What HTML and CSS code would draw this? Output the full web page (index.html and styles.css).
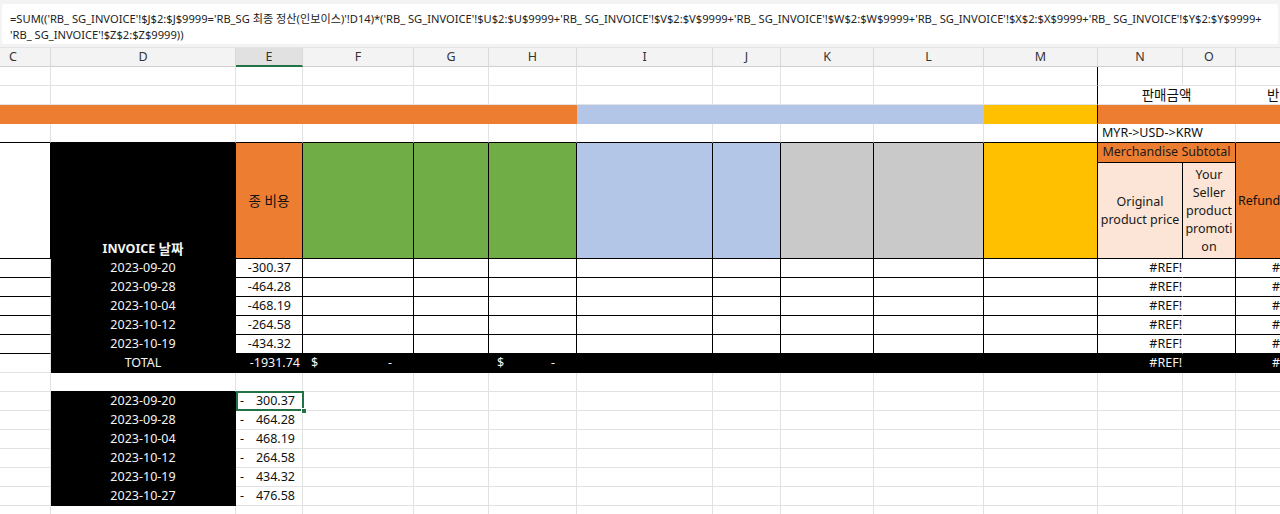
FILE: index.html
```html
<!DOCTYPE html>
<html lang="ko">
<head>
<meta charset="utf-8">
<title>RB_SG 최종 정산</title>
<link rel="stylesheet" href="styles.css">
</head>
<body>
<div class="app">
  <div class="fbar">
    <div class="fbox">=SUM(('RB_ SG_INVOICE'!$J$2:$J$9999='RB_SG 최종 정산(인보이스)'!D14)*('RB_ SG_INVOICE'!$U$2:$U$9999+'RB_ SG_INVOICE'!$V$2:$V$9999+'RB_ SG_INVOICE'!$W$2:$W$9999+'RB_ SG_INVOICE'!$X$2:$X$9999+'RB_ SG_INVOICE'!$Y$2:$Y$9999+<br>'RB_ SG_INVOICE'!$Z$2:$Z$9999))</div>
  </div>
  <div class="sheet">
    <!-- column headers -->
    <div class="h hl">C</div><div class="h">D</div><div class="h hs">E</div><div class="h">F</div><div class="h">G</div><div class="h">H</div><div class="h">I</div><div class="h">J</div><div class="h">K</div><div class="h">L</div><div class="h">M</div><div class="h">N</div><div class="h">O</div><div class="h">P</div>
    <!-- row 1 -->
    <div></div><div></div><div></div><div></div><div></div><div></div><div></div><div></div><div></div><div></div><div class="br"></div><div></div><div></div><div></div>
    <!-- row 2 -->
    <div></div><div></div><div></div><div></div><div></div><div></div><div></div><div></div><div></div><div></div><div class="br"></div><div class="s2 ctr"><span class="ko">판매금액</span></div><div class="pl31"><span class="ko">반품금액</span></div>
    <!-- row 3 -->
    <div class="s6 fo"></div><div class="s4 fb"></div><div class="fy br"></div><div class="s3 fo"></div>
    <!-- row 4 -->
    <div class="bb"></div><div class="bb"></div><div class="bb"></div><div class="bb"></div><div class="bb"></div><div class="bb"></div><div class="bb"></div><div class="bb"></div><div class="bb"></div><div class="bb"></div><div class="bb br"></div><div class="s2 bb pl4">MYR-&gt;USD-&gt;KRW</div><div class="bb"></div>
    <!-- row 5 (two sub rows) -->
    <div class="r2 bb br"></div>
    <div class="r2 k hd">INVOICE&nbsp;<span class="ko">날짜</span></div>
    <div class="r2 fo br bb vc"><span class="ko">종 비용</span></div>
    <div class="r2 fg br bb"></div>
    <div class="r2 fg br bb"></div>
    <div class="r2 fg br bb"></div>
    <div class="r2 fb br bb"></div>
    <div class="r2 fb br bb"></div>
    <div class="r2 fs br bb"></div>
    <div class="r2 fs br bb"></div>
    <div class="r2 fy br bb"></div>
    <div class="s2 fo br bb ctr ms">Merchandise Subtotal</div>
    <div class="r2 fo bb vl">Refund amount</div>
    <div class="fp br bb wrap">Original<br>product price</div>
    <div class="fp br bb wrap">Your<br>Seller<br>product<br>promoti<br>on</div>
    <!-- data rows -->
    <div class="bb"></div><div class="k ctr">2023-09-20</div><div class="bb br rt pr11">-300.37</div><div class="bb br"></div><div class="bb br"></div><div class="bb br"></div><div class="bb br"></div><div class="bb br"></div><div class="bb br"></div><div class="bb br"></div><div class="bb br"></div><div class="bb nr rt">#REF!</div><div class="bb br"></div><div class="bb pl36">#REF!</div>
    <div class="bb"></div><div class="k ctr">2023-09-28</div><div class="bb br rt pr11">-464.28</div><div class="bb br"></div><div class="bb br"></div><div class="bb br"></div><div class="bb br"></div><div class="bb br"></div><div class="bb br"></div><div class="bb br"></div><div class="bb br"></div><div class="bb nr rt">#REF!</div><div class="bb br"></div><div class="bb pl36">#REF!</div>
    <div class="bb"></div><div class="k ctr">2023-10-04</div><div class="bb br rt pr11">-468.19</div><div class="bb br"></div><div class="bb br"></div><div class="bb br"></div><div class="bb br"></div><div class="bb br"></div><div class="bb br"></div><div class="bb br"></div><div class="bb br"></div><div class="bb nr rt">#REF!</div><div class="bb br"></div><div class="bb pl36">#REF!</div>
    <div class="bb"></div><div class="k ctr">2023-10-12</div><div class="bb br rt pr11">-264.58</div><div class="bb br"></div><div class="bb br"></div><div class="bb br"></div><div class="bb br"></div><div class="bb br"></div><div class="bb br"></div><div class="bb br"></div><div class="bb br"></div><div class="bb nr rt">#REF!</div><div class="bb br"></div><div class="bb pl36">#REF!</div>
    <div class="bb"></div><div class="k ctr">2023-10-19</div><div class="bb br rt pr11">-434.32</div><div class="bb br"></div><div class="bb br"></div><div class="bb br"></div><div class="bb br"></div><div class="bb br"></div><div class="bb br"></div><div class="bb br"></div><div class="bb br"></div><div class="bb nr rt">#REF!</div><div class="bb br"></div><div class="bb pl36">#REF!</div>
    <!-- total row -->
    <div></div><div class="k ctr">TOTAL</div><div class="k rt pr2">-1931.74</div><div class="k acc"><span>$</span><span>-</span></div><div class="k"></div><div class="k acc"><span>$</span><span>-</span></div><div class="k"></div><div class="k"></div><div class="k"></div><div class="k"></div><div class="k"></div><div class="k rt">#REF!</div><div class="k"></div><div class="k pl36">#REF!</div>
    <!-- blank row -->
    <div></div><div class="bb"></div><div></div><div></div><div></div><div></div><div></div><div></div><div></div><div></div><div></div><div></div><div></div><div></div>
    <!-- lower rows -->
    <div></div><div class="k ctr">2023-09-20</div><div class="acc2 sel"><span>-</span><span>300.37</span></div><div></div><div></div><div></div><div></div><div></div><div></div><div></div><div></div><div></div><div></div><div></div>
    <div></div><div class="k ctr">2023-09-28</div><div class="acc2"><span>-</span><span>464.28</span></div><div></div><div></div><div></div><div></div><div></div><div></div><div></div><div></div><div></div><div></div><div></div>
    <div></div><div class="k ctr">2023-10-04</div><div class="acc2"><span>-</span><span>468.19</span></div><div></div><div></div><div></div><div></div><div></div><div></div><div></div><div></div><div></div><div></div><div></div>
    <div></div><div class="k ctr">2023-10-12</div><div class="acc2"><span>-</span><span>264.58</span></div><div></div><div></div><div></div><div></div><div></div><div></div><div></div><div></div><div></div><div></div><div></div>
    <div></div><div class="k ctr">2023-10-19</div><div class="acc2"><span>-</span><span>434.32</span></div><div></div><div></div><div></div><div></div><div></div><div></div><div></div><div></div><div></div><div></div><div></div>
    <div></div><div class="k ctr">2023-10-27</div><div class="acc2"><span>-</span><span>476.58</span></div><div></div><div></div><div></div><div></div><div></div><div></div><div></div><div></div><div></div><div></div><div></div>
    <!-- last partial row -->
    <div></div><div></div><div></div><div></div><div></div><div></div><div></div><div></div><div></div><div></div><div></div><div></div><div></div><div></div>
  </div>
</div>
</body>
</html>
```
FILE: styles.css
```css
:root {
  --grid: #e2e2e2;
}
html, body {
  margin: 0;
  padding: 0;
  background: #fff;
}
body {
  width: 1280px;
  height: 514px;
  overflow: hidden;
  font-family: "Noto Sans", "Noto Sans CJK KR", sans-serif;
  font-size: 12.5px;
  color: #111;
}
.app {
  width: 1280px;
  height: 514px;
  overflow: hidden;
}
.fbar {
  height: 47px;
  box-sizing: border-box;
  background: #f3f3f3;
  padding: 4px 2px 0 2px;
}
.fbox {
  height: 40px;
  box-sizing: border-box;
  background: #fff;
  border-radius: 3px;
  padding: 7px 0 0 8px;
  font-size: 11.15px;
  line-height: 16px;
  color: #222;
  white-space: nowrap;
  overflow: hidden;
}
.sheet {
  display: grid;
  width: 1336px;
  grid-template-columns: 51px 185px 67px 111px 75px 88px 136px 68px 93px 110px 114px 85px 53px 100px;
  grid-template-rows: 20px 19px 19px 19px 19px 20px 96px repeat(6, 19px) 19px repeat(6, 19px) 19px;
}
.sheet > div {
  box-sizing: border-box;
  border-right: 1px solid var(--grid);
  border-bottom: 1px solid var(--grid);
  white-space: nowrap;
  overflow: hidden;
  line-height: 18px;
  padding: 0 2px;
  position: relative;
}
.ko {
  font-size: 13.5px;
}
/* column header */
.sheet > .h {
  background: #f3f3f3;
  color: #333;
  text-align: center;
  border-top: 1px solid #e4e4e4;
  border-right-color: #d9d9d9;
  border-bottom-color: #cfcfcf;
}
.sheet > .hl { text-align: left; padding-left: 9px; }
.sheet > .hs {
  background: #e1e1e1;
  border-bottom: 2px solid #217346;
}
/* spans */
.s2 { grid-column: span 2; }
.s3 { grid-column: span 3; }
.s4 { grid-column: span 4; }
.s6 { grid-column: span 6; }
.r2 { grid-row: span 2; }
/* fills */
.sheet > .fo { background: #ed7d31; border-color: #ed7d31; }
.sheet > .fg { background: #70ad47; border-color: #70ad47; }
.sheet > .fb { background: #b4c6e7; border-color: #b4c6e7; }
.sheet > .fs { background: #c9c9c9; border-color: #c9c9c9; }
.sheet > .fy { background: #ffc000; border-color: #ffc000; }
.sheet > .fp { background: #fce4d6; border-color: #fce4d6; }
.sheet > .k { background: #000; border-color: #000; color: #f4f4f4; }
/* borders */
.sheet > .bb { border-bottom-color: #000; }
.sheet > .br { border-right-color: #000; }
.sheet > .nr { border-right-color: #fff; }
/* alignment */
.ctr { text-align: center; }
.sheet > .rt { text-align: right; padding-right: 0; }
.sheet > .pr11 { padding-right: 11px; }
.sheet > .pr2 { padding-right: 2px; }
.sheet > .pl4 { padding-left: 4px; }
.sheet > .pl31 { padding-left: 31px; }
.sheet > .pl36 { padding-left: 36px; }
.vc {
  display: flex;
  align-items: center;
  justify-content: center;
}
.vl {
  display: flex;
  align-items: center;
  padding-left: 4px;
}
.hd {
  display: flex;
  align-items: flex-end;
  justify-content: center;
  font-weight: bold;
  color: #fff;
  padding-bottom: 1px;
}
.ms { line-height: 19px; color: #1a1a1a; }
.wrap {
  display: flex;
  align-items: center;
  justify-content: center;
  text-align: center;
  line-height: 19px;
  white-space: normal;
  color: #1a1a1a;
}
.sheet > .acc {
  display: flex;
  justify-content: space-between;
  padding: 0 21px 0 8px;
}
.sheet > .acc2 {
  display: flex;
  justify-content: space-between;
  padding: 0 7px 0 4px;
}
/* active cell */
.sheet > .sel {
  overflow: visible;
  z-index: 2;
}
.sel::after {
  content: "";
  position: absolute;
  left: 0;
  top: -1px;
  width: 68px;
  height: 20px;
  box-sizing: border-box;
  border: 2px solid #217346;
  pointer-events: none;
}
.sel::before {
  content: "";
  position: absolute;
  left: 65px;
  top: 16px;
  width: 4px;
  height: 4px;
  background: #217346;
  border: 1px solid #fff;
  z-index: 3;
}
```
